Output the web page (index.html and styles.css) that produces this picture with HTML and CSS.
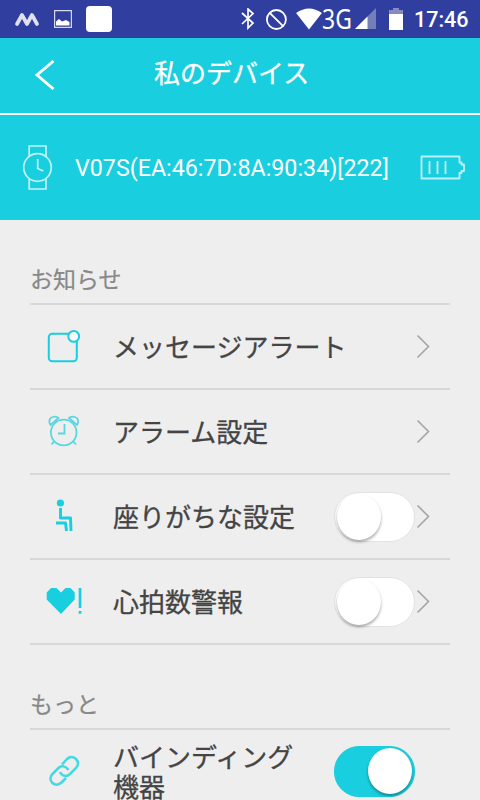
FILE: index.html
```html
<!DOCTYPE html>
<html lang="ja">
<head>
<meta charset="utf-8">
<title>私のデバイス</title>
<link rel="stylesheet" href="styles.css">
</head>
<body>
<div class="status">
  <svg class="s-wave" width="26" height="16" viewBox="14 11 26 16"><path d="M17 24l5-9 5 9 5-9 5 9" fill="none" stroke="#dfe1f0" stroke-width="3.7" stroke-linecap="round" stroke-linejoin="round"/></svg>
  <svg class="s-picture" width="18" height="19" viewBox="54 10 18 19"><path d="M54.6 10.6h16.8v16.8H54.6z" fill="none" stroke="#d6d8eb" stroke-width="1.2"/><path d="M56 25.500v-4l3-2.500 3 2.500 4-1.500 3.500 2v3.500z" fill="#fff"/></svg>
  <div class="s-app"></div>
  <svg class="s-bluetooth" width="14" height="22" viewBox="241 9 14 22"><path d="M242 14l11 10-5 5V10l5 4.5L242 25" fill="none" stroke="#fff" stroke-width="1.7"/></svg>
  <svg class="s-block" width="22" height="22" viewBox="265 8 22 22"><circle cx="276.4" cy="19.5" r="9.5" fill="none" stroke="#fff" stroke-width="1.8"/><path d="M269.7 12.8l13.4 13.4" stroke="#fff" stroke-width="1.8"/></svg>
  <svg class="s-wifi" width="26" height="22" viewBox="296.5 7.500 26 22"><path d="M296.600 12.500Q309.500 3.500 322.400 12.500L309.500 29z" fill="#fff"/></svg>
  <span class="network">3G</span>
  <svg class="s-signal" width="21" height="22" viewBox="355 7 21 22"><path d="M355 28l21-21v21z" fill="#767eba"/><path d="M355 28l12.500-12.500V28z" fill="#fff"/></svg>
  <svg class="s-battery" width="14" height="22" viewBox="389 7 14 22"><path d="M389 13V9h4V7h6v2h4v4z" fill="#858cc4"/><path d="M389 13h14v16h-14z" fill="#fff"/></svg>
  <span class="clock">17:46</span>
</div>
<header class="header">
  <svg class="back" width="22" height="34" viewBox="34 59 22 34"><path d="M53.500 61L37 75l16.500 14" fill="none" stroke="#fff" stroke-width="2.900"/></svg>
  <h1>私のデバイス</h1>
</header>
<section class="device">
  <svg class="watch" width="32" height="48" viewBox="22 144 32 48" fill="none" stroke="#c5f4f8" stroke-width="1.700"><path d="M29.200 156.500V146H46v10.500M29.200 178.500V189H46v-10.500"/><circle cx="37.500" cy="167.500" r="13.800"/><path d="M37.700 159v9.500l5.500 2.500"/></svg>
  <span class="device-name">V07S(EA:46:7D:8A:90:34)[222]</span>
  <svg class="battery" width="46" height="26" viewBox="420 155 46 26" fill="none" stroke="#b9f0f5" stroke-width="1.900"><path d="M421.500 156.500h38v6h2v2h2.500v6.500h-2.500v2h-2v5.500h-38z" stroke-linejoin="round"/><path d="M429.500 161v13M437.500 161v13M445.500 161v13"/></svg>
</section>
<main>
  <h2>お知らせ</h2>
  <div class="row">
    <svg class="icon" width="44" height="44" viewBox="42 324 44 44" fill="none" stroke="#19cede" stroke-width="2"><rect x="48.800" y="333.800" width="28" height="27.500" rx="3.500"/><circle cx="73.700" cy="336.400" r="5.400" fill="#fafafa"/></svg>
    <span class="label">メッセージアラート</span>
    <svg class="arrow" width="16" height="26" viewBox="415 333 16 26"><path d="M417.500 335.500l11 11-11 11"/></svg>
  </div>
  <div class="row">
    <svg class="icon" width="44" height="44" viewBox="42 409 44 44" fill="none" stroke="#58d7e1" stroke-width="1.800"><circle cx="63.700" cy="432.500" r="12.800"/><path d="M64.500 424v9.500H58M54.500 441l-3 3.500M73 441l3 3.500M50.500 425c-2-3-1.500-7 2-8 3-1 5 0 6 1zM77 425c2-3 1.500-7-2-8-3-1-5 0-6 1z"/></svg>
    <span class="label">アラーム設定</span>
    <svg class="arrow" width="16" height="26" viewBox="415 333 16 26"><path d="M417.500 335.500l11 11-11 11"/></svg>
  </div>
  <div class="row">
    <svg class="icon" width="44" height="44" viewBox="42 494 44 44"><circle cx="60.400" cy="503" r="3.600" fill="#19cede"/><path d="M60.500 508v10h10l.5 13M56 523h9.500l1 8" fill="none" stroke="#19cede" stroke-width="2.900" stroke-linejoin="round"/></svg>
    <span class="label">座りがちな設定</span>
    <div class="switch"><div class="knob"></div></div>
    <svg class="arrow" width="16" height="26" viewBox="415 333 16 26"><path d="M417.500 335.500l11 11-11 11"/></svg>
  </div>
  <div class="row">
    <svg class="icon" width="44" height="44" viewBox="42 579 44 44" fill="#19cede"><path d="M51 588h5.500l4.500 4.500 4.500-4.500h5l4.200 4.500v7L61 614l-14.300-14.500v-7zM78.700 588h2.700v20h-2.700zM78.700 611h2.700v2.800h-2.700z"/></svg>
    <span class="label">心拍数警報</span>
    <div class="switch"><div class="knob"></div></div>
    <svg class="arrow" width="16" height="26" viewBox="415 333 16 26"><path d="M417.500 335.500l11 11-11 11"/></svg>
  </div>
  <h2>もっと</h2>
  <div class="row last">
    <svg class="icon" width="44" height="44" viewBox="42 749 44 44" fill="none" stroke="#45d8e4" stroke-width="2.500"><path d="M62 764.500l5-5.500c3-3 7-2.500 9 0 2.500 2.500 2.500 6 0 9l-6 6c-3 3-8 2.500-10-2"/><path d="M66 778l-4.500 4.500c-3 3-7 2.500-9 .5-3-3-2.500-6.500 0-9l6-6c3-3 7.500-2 10 2"/></svg>
    <span class="label">バインディング機器</span>
    <div class="switch on"><div class="knob"></div></div>
  </div>
</main>
</body>
</html>
```

FILE: styles.css
```css
* {
  box-sizing: border-box;
}

body {
  margin: 0;
  height: 800px;
  overflow: hidden;
  background: #eee;
  color: #444;
  font-family: Roboto, "Noto Sans CJK JP", sans-serif;
}

svg {
  display: block;
  flex: none;
}

.status {
  display: flex;
  align-items: center;
  height: 38px;
  padding-left: 14px;
  background: #303f9f;
  color: #fff;
}

.s-picture {
  margin-left: 14px;
}

.s-app {
  width: 26px;
  height: 26px;
  margin-left: 14px;
  border-radius: 4px;
  background: #fff;
}

.s-bluetooth {
  margin-left: 129px;
}

.s-block {
  margin-left: 10px;
}

.s-wifi {
  margin-left: 9px;
}

.network {
  width: 32px;
  margin-top: -1px;
  font: 27px/38px "Noto Sans", sans-serif;
  white-space: nowrap;
  transform: scaleX(.85);
  transform-origin: left;
}

.s-signal {
  margin-left: 1px;
}

.s-battery {
  margin-left: 13px;
}

.clock {
  margin: 1px 0 0 11px;
  font-size: 21.5px;
  font-weight: 500;
  line-height: 38px;
}

.header {
  display: flex;
  align-items: center;
  height: 77px;
  padding-left: 34px;
  border-bottom: 2px solid #fff;
  background: #19cede;
  color: #fff;
}

h1 {
  margin: 0 0 3px 98px;
  font-size: 26px;
  font-weight: 400;
  line-height: 38px;
  -webkit-text-stroke: .3px;
}

.device {
  display: flex;
  align-items: center;
  height: 105px;
  padding-left: 22px;
  background: #19cede;
  color: #fff;
}

.device-name {
  width: 366px;
  padding: 1px 0 0 21px;
  font-size: 23.25px;
  white-space: nowrap;
}

main {
  padding: 0 30px;
}

h2 {
  height: 85px;
  margin: 0;
  padding-top: 44px;
  border-bottom: 2px solid #d8d8d8;
  color: #888;
  font-size: 23px;
  font-weight: 400;
  line-height: 34px;
  -webkit-text-stroke: .2px;
}

.row {
  display: flex;
  align-items: center;
  height: 85px;
  padding: 0 19px 2px 12px;
  border-bottom: 2px solid #d8d8d8;
}

.row.last {
  height: 84px;
  border-bottom: 0;
}

.label {
  width: 192px;
  margin-left: 27px;
  margin-right: auto;
  padding-top: 4px;
  font-size: 26px;
  line-height: 30px;
  -webkit-text-stroke: .3px;
}

.last .label {
  padding-top: 3px;
}

.row:nth-child(2) .label {
  width: 240px;
}

.arrow {
  fill: none;
  stroke: #a5a5a5;
  stroke-width: 1.6;
}

.switch {
  display: flex;
  flex: none;
  align-items: center;
  width: 81px;
  height: 50px;
  margin-top: 2px;
  padding: 0 2px;
  border: 1px solid #e2e2e2;
  border-radius: 25px;
  background: #fff;
}

.knob {
  width: 44px;
  height: 46px;
  border-radius: 50%;
  background: #fff;
  box-shadow: 0 2px 3px rgba(0, 0, 0, .35);
}

.switch.on {
  justify-content: flex-end;
  height: 51px;
  margin-top: 0;
  margin-right: 16px;
  border-color: #19cede;
  background: #19cede;
}
```
